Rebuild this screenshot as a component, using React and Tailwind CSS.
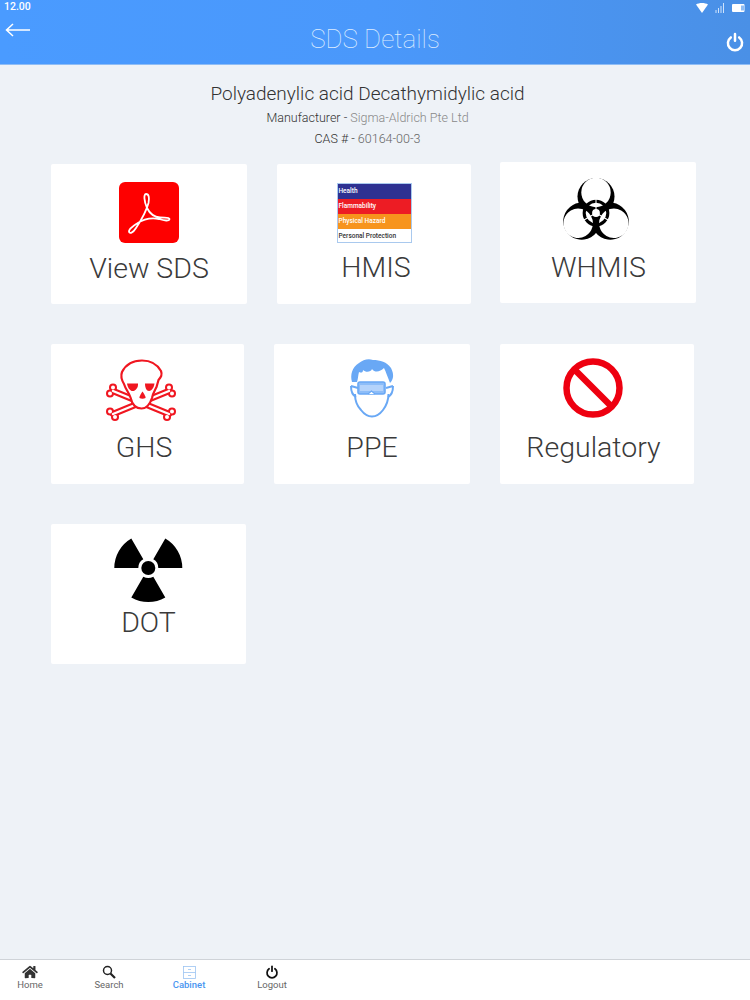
import { FaHome } from "react-icons/fa";

const PowerIcon = ({ className, width = 3 }) => (
  <svg viewBox="0 0 24 24" className={className} fill="none" stroke="currentColor" strokeWidth={width} strokeLinecap="round">
    <path d="M7 6.500a8.500 8.500 0 1 0 10 0" />
    <path d="M12 2.500v8" />
  </svg>
);

const PdfIcon = () => (
  <svg viewBox="0 0 60 61" className="w-[60px] h-[61px]">
    <rect width="60" height="61" rx="6" fill="#fe0000" />
    <path
      d="M27 12C24.500 12 25 19 28 26C31 32 35 35 41 35.500C46 36 50 35 50.500 37C50.500 39.500 45 38.500 40 37C32 35.500 24 37.500 18 41.500C14 44 10 47 10 49.500C10.500 52 14 51 17 46C21 40 27 30 29.500 21C30.500 16 30 12 27 12Z"
      fill="none"
      stroke="#fff"
      strokeWidth="1.800"
      strokeLinejoin="round"
    />
  </svg>
);

const HmisIcon = () => (
  <div className="w-[75px] h-[60px] border border-[#a9c9ee] flex flex-col text-[6.5px] font-medium leading-[15px] bg-white">
    <div className="h-[15px] bg-[#2e3192] text-white pl-[1px]">Health</div>
    <div className="h-[15px] bg-[#ed1c24] text-white pl-[1px]">Flammability</div>
    <div className="h-[15px] bg-[#f7941d] text-white pl-[1px]">Physical Hazard</div>
    <div className="h-[14px] text-[#333] pl-[1px]">Personal Protection</div>
  </div>
);

const BiohazardIcon = () => (
  <svg viewBox="-35 -35 70 70" className="w-[72px] h-[72px]">
    <defs>
      <mask id="crescents">
        <rect x="-40" y="-40" width="80" height="80" fill="#000" />
        {[0, 120, 240].map((a) => (
          <circle key={a} transform={`rotate(${a})`} cx="0" cy="-16" r="18" fill="#fff" />
        ))}
        {[0, 120, 240].map((a) => (
          <circle key={a} transform={`rotate(${a})`} cx="0" cy="-20" r="14.300" fill="#000" />
        ))}
      </mask>
      <mask id="cuts">
        <rect x="-40" y="-40" width="80" height="80" fill="#fff" />
        <circle r="3.800" fill="#000" />
        {[0, 120, 240].map((a) => (
          <line key={a} transform={`rotate(${a})`} x1="0" y1="0" x2="0" y2="-13.500" stroke="#000" strokeWidth="1" />
        ))}
      </mask>
    </defs>
    <g mask="url(#cuts)">
      <rect x="-40" y="-40" width="80" height="80" fill="#000" mask="url(#crescents)" />
      <circle r="11.500" fill="none" stroke="#000" strokeWidth="3" />
    </g>
  </svg>
);

const bones = (
  <>
    <line x1="23" y1="41" x2="79" y2="64" />
    <line x1="79" y1="41" x2="23" y2="64" />
  </>
);
const knobs = [
  [23, 37.500],
  [20, 43.500],
  [82, 61.500],
  [77, 67],
  [79, 37.500],
  [82, 43.500],
  [20, 61.500],
  [25, 67],
];

const SkullIcon = () => (
  <svg viewBox="0 0 100 75" className="w-[100px] h-[75px]">
    <g stroke="#f01620" strokeWidth="6.400" strokeLinecap="round">{bones}</g>
    {knobs.map(([x, y]) => (
      <circle key={`${x}-${y}`} cx={x} cy={y} r="4" fill="#f01620" />
    ))}
    {knobs.map(([x, y]) => (
      <circle key={`w${x}-${y}`} cx={x} cy={y} r="2" fill="#fff" />
    ))}
    <g stroke="#fff" strokeWidth="2.400" strokeLinecap="round">{bones}</g>
    <path
      d="M32 22C36 14 44 10.500 52 10.500C60 10.500 67 14 71 21C72.500 25 71 27 68.500 30L66.500 37C64 42 62.500 44 62 48C60 54 56 58.500 51.500 58.500C46 58.500 42 54 40.500 47.500C39 43 35.500 39 34 34C31 29 30.500 26 32 22Z"
      fill="#fff"
      stroke="#f01620"
      strokeWidth="2.200"
    />
    <path d="M37 33.500H48C48.500 38 45 41.500 42 41C39.500 40.500 37.500 37 37 33.500Z" fill="#f01620" />
    <path d="M55 33.500H64.500C64 37 62 41 59 41C56.500 41 55 38 55 33.500Z" fill="#f01620" />
    <path d="M52.500 41.500C54 43.500 56 47 55.500 48C54 49 51 49 49.500 48C49 47 51 43.500 52.500 41.500Z" fill="#f01620" />
  </svg>
);

const PpeIcon = () => (
  <svg viewBox="0 0 80 75" className="w-[80px] h-[75px]">
    <path
      d="M25 44C25 50 27 56 31 60C34 64 38 66.500 42 66.500C46 66.500 50 64 53 60C56 56 58.500 50 58.500 44"
      fill="none"
      stroke="#69a8f5"
      strokeWidth="2"
    />
    <path d="M21 36L28 38M63 36L56 38M21 36C21 41 22 45 26 47M63 36C63 41 62 45 58 47" fill="none" stroke="#69a8f5" strokeWidth="2" />
    <path
      d="M22 32C20 25 22 17 29 13C33 10 38 8 43 10C50 10 57 12 61 18C64 24 64 29 60 33C58 28 56 22 54 18C50 22 45 23 42 19C41 22 36 23 33 20C33 23 31 23 29 22C28 26 28 29 27 32Z"
      fill="#69a8f5"
    />
    <rect x="28" y="32" width="27" height="12" rx="2" fill="#8dbdf8" stroke="#69a8f5" strokeWidth="1.600" />
    <rect x="30" y="35" width="23" height="6" fill="#b4d3fb" />
    <path d="M38 44L41.500 41L45 44" fill="#fff" stroke="#69a8f5" strokeWidth="1.200" />
  </svg>
);

const NoIcon = () => (
  <svg viewBox="0 0 60 60" className="w-[60px] h-[60px]">
    <circle cx="30" cy="30" r="26.500" fill="none" stroke="#ee0010" strokeWidth="6.500" />
    <line x1="11" y1="11" x2="49" y2="49" stroke="#ee0010" strokeWidth="6.500" />
  </svg>
);

// three 60 degree blades round the middle dot
const blade = (from) => {
  const cx = 49.3;
  const cy = 38;
  const pt = (r, deg) => {
    const t = (deg * Math.PI) / 180;
    return `${(cx + r * Math.cos(t)).toFixed(2)} ${(cy - r * Math.sin(t)).toFixed(2)}`;
  };
  return `M${pt(10, from)}L${pt(34, from)}A34 34 0 0 0 ${pt(34, from + 60)}L${pt(10, from + 60)}A10 10 0 0 1 ${pt(10, from)}Z`;
};

const RadiationIcon = () => (
  <svg viewBox="0 0 100 80" className="w-[100px] h-[80px]">
    <path d={blade(0)} fill="#000" />
    <path d={blade(120)} fill="#000" />
    <path d={blade(240)} fill="#000" />
    <circle cx="49.3" cy="38" r="7" fill="#000" />
  </svg>
);

const Card = ({ label, className, iconClass, labelClass, children }) => (
  <div className={`h-[140px] bg-white rounded-[2px] flex flex-col items-center shrink-0 ${className}`}>
    <div className={`flex justify-center ${iconClass}`}>{children}</div>
    <div className={`leading-[36px] font-light text-[28.5px] text-[#3a3a3a] ${labelClass}`}>{label}</div>
  </div>
);

const Tab = ({ label, width, active, children }) => (
  <div className={`${width} flex flex-col items-center`}>
    <div className="h-[15px] flex items-end justify-center">{children}</div>
    <div className={`text-[9.5px] leading-[12px] ${active ? "text-[#4a96f0] font-medium" : "text-[#666]"}`}>{label}</div>
  </div>
);

export default function App() {
  return (
    <div className="w-[750px] h-[1000px] bg-[#eef2f7] flex flex-col overflow-hidden font-['Roboto',sans-serif]">
      <div className="h-[65px] bg-gradient-to-r from-[#4a9bff] via-[#4a98fb] to-[#4a90e6] border-b border-[#8fbdf5] shrink-0">
        <div className="h-[14px] flex justify-between items-center pl-[4px] pr-[5px]">
          <span className="text-white text-[10.5px] font-medium leading-[12px]">12.00</span>
          <div className="flex items-center gap-[7px] pt-[1px]">
            <svg viewBox="0 0 12 10" className="w-[12px] h-[10px]">
              <path d="M0 1.500C3 -.5 9 -.5 12 1.500L6 10Z" fill="#fff" />
            </svg>
            <svg viewBox="0 0 10 10" className="w-[10px] h-[10px]" stroke="#cfe3fc" strokeWidth="1">
              <path d="M1 10V7M3.500 10V5M6 10V3M8.500 10V0" />
            </svg>
            <svg viewBox="0 0 13 8" className="w-[13px] h-[8px]">
              <path d="M0 1a1 1 0 0 1 1-1h10.500a1 1 0 0 1 1 1v6a1 1 0 0 1-1 1H1a1 1 0 0 1-1-1Z" fill="#fff" />
              <path d="M9 1.500h3v5H9Z" fill="#8fbdf5" />
            </svg>
          </div>
        </div>
        <div className="flex items-start">
          <div className="w-[40px] pl-[5px] pt-[9px]">
            <svg viewBox="0 0 25 14" className="w-[25px] h-[14px]" fill="none" stroke="#fff" strokeWidth="1.500">
              <path d="M25 7H1M8 1L1.500 7L8 13" />
            </svg>
          </div>
          <div className="flex-1 text-center text-[26px] leading-[30px] font-thin text-[#dcebff] pt-[10px]">SDS Details</div>
          <div className="w-[40px] flex justify-end pr-[5px] pt-[18px] text-white">
            <PowerIcon className="w-[20px] h-[20px]" />
          </div>
        </div>
      </div>

      <div className="flex-1">
        <div className="text-center pt-[17px] pr-[15px]">
          <div className="text-[19px] leading-[24px] font-light text-[#333]">Polyadenylic acid Decathymidylic acid</div>
          <div className="text-[12.5px] leading-[16px] mt-[4px] font-light text-[#333]">
            Manufacturer - <span className="text-[#888]">Sigma-Aldrich Pte Ltd</span>
          </div>
          <div className="text-[12.5px] leading-[16px] mt-[5px] font-light text-[#333]">
            CAS # - <span className="text-[#666]">60164-00-3</span>
          </div>
        </div>

        <div className="pl-[51px] mt-[17px] flex items-start">
          <Card label="View SDS" className="w-[196px]" iconClass="pt-[18px]" labelClass="mt-[8px]">
            <PdfIcon />
          </Card>
          <Card label="HMIS" className="w-[194px] ml-[30px]" iconClass="pt-[19px]" labelClass="mt-[7px] pl-[4px]">
            <HmisIcon />
          </Card>
          <Card label="WHMIS" className="w-[196px] min-h-[141px] ml-[29px] -mt-[2px]" iconClass="pt-[15px] -ml-[4px]" labelClass="mt-[1px] ml-[1px]">
            <BiohazardIcon />
          </Card>
        </div>

        <div className="pl-[51px] mt-[40px] flex items-start">
          <Card label="GHS" className="w-[193px]" iconClass="pt-[6px] -ml-[15px]" labelClass="mt-[5px] pr-[7px]">
            <SkullIcon />
          </Card>
          <Card label="PPE" className="w-[196px] ml-[30px]" iconClass="pt-[6px] -ml-[4px]" labelClass="mt-[5px]">
            <PpeIcon />
          </Card>
          <Card label="Regulatory" className="w-[194px] ml-[30px]" iconClass="pt-[14px] -ml-[8px]" labelClass="mt-[12px] pr-[7px]">
            <NoIcon />
          </Card>
        </div>

        <div className="pl-[51px] mt-[40px] flex items-start">
          <Card label="DOT" className="w-[195px]" iconClass="pt-[6px]" labelClass="-mt-[5px]">
            <RadiationIcon />
          </Card>
        </div>
      </div>

      <div className="h-[41px] bg-white border-t border-[#cfd3d8] shrink-0 flex items-start pt-[4px]">
        <Tab label="Home" width="w-[60px]">
          <FaHome className="text-[#333] w-[16px] h-[14px]" />
        </Tab>
        <Tab label="Search" width="w-[98px]">
          <svg viewBox="0 0 14 14" className="w-[14px] h-[14px]" fill="none" stroke="#222">
            <circle cx="5.500" cy="5.500" r="4" strokeWidth="1.500" />
            <path d="M8.500 8.500L13 13" strokeWidth="2.200" />
          </svg>
        </Tab>
        <Tab label="Cabinet" width="w-[62px]" active>
          <svg viewBox="0 0 13 13" className="w-[13px] h-[13px]" fill="none" stroke="#9cc4f2" strokeWidth=".8">
            <rect x=".5" y=".5" width="12" height="12" />
            <path d="M.5 6.500h12M5 3.500h3M5 9.500h3" />
          </svg>
        </Tab>
        <Tab label="Logout" width="w-[104px]">
          <PowerIcon className="w-[14px] h-[14px] text-[#111]" />
        </Tab>
      </div>
    </div>
  );
}
